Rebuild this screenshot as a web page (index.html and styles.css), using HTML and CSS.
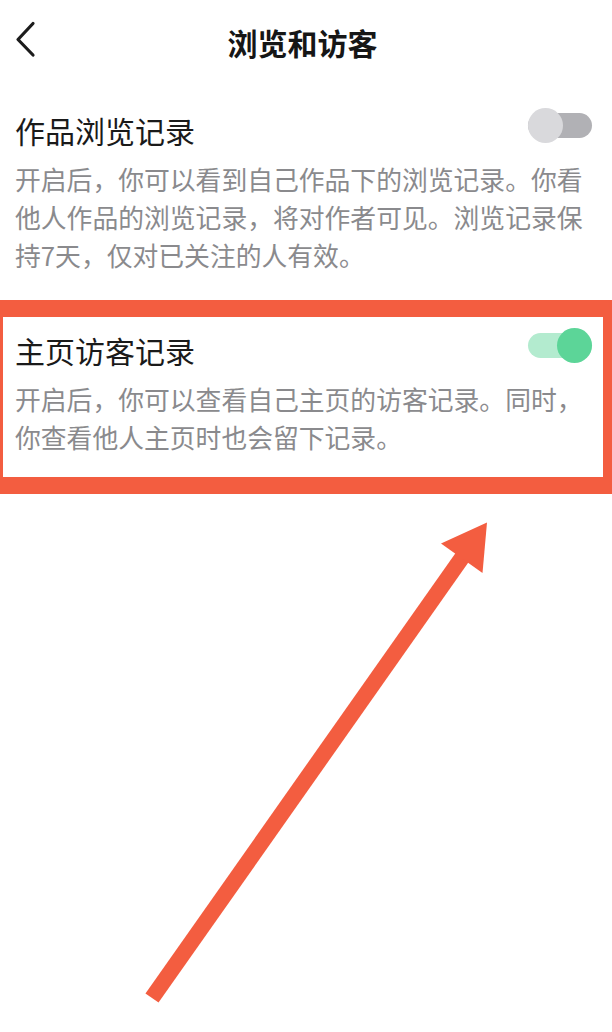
FILE: index.html
```html
<!DOCTYPE html>
<html lang="zh-CN">
<head>
<meta charset="utf-8">
<title>浏览和访客</title>
<link rel="stylesheet" href="styles.css">
</head>
<body>
<div class="page">
  <header class="topbar">
    <button class="back" aria-label="返回">
      <svg width="30" height="40" viewBox="0 0 30 40"><path d="M19 3.5 L4 19.5 L19 35" fill="none" stroke="#1c1c1c" stroke-width="3.2" stroke-linecap="round" stroke-linejoin="round"/></svg>
    </button>
    <h1 class="title">浏览和访客</h1>
    <span></span>
  </header>

  <section class="setting">
    <div class="setting-head">
      <h2 class="setting-name">作品浏览记录</h2>
      <span class="switch"><span class="track"></span><span class="knob"></span></span>
    </div>
    <p class="setting-desc">开启后，你可以看到自己作品下的浏览记录。你看他人作品的浏览记录，将对作者可见。浏览记录保持7天，仅对已关注的人有效。</p>
  </section>

  <section class="setting highlighted">
    <div class="setting-head">
      <h2 class="setting-name">主页访客记录</h2>
      <span class="switch on"><span class="track"></span><span class="knob"></span></span>
    </div>
    <p class="setting-desc">开启后，你可以查看自己主页的访客记录。同时，你查看他人主页时也会留下记录。</p>
    <div class="mark-box"></div>
  </section>

  <svg class="arrow" width="612" height="1032" viewBox="0 0 612 1032">
    <line x1="152" y1="998" x2="466" y2="552" stroke="#f35d40" stroke-width="16"/>
    <polygon points="487,522.5 441,543.5 482.5,573" fill="#f35d40"/>
  </svg>
</div>
</body>
</html>
```

FILE: styles.css
```css
html, body {
  margin: 0;
  padding: 0;
  background: #ffffff;
  overflow: hidden;
}

.page {
  position: relative;
  width: 612px;
  height: 1032px;
  overflow: hidden;
  font-family: "Noto Sans CJK SC", "Noto Sans", sans-serif;
}

.topbar {
  display: grid;
  grid-template-columns: 1fr auto 1fr;
  align-items: center;
  height: 84px;
}

.back {
  justify-self: start;
  margin-left: 14px;
  margin-top: -4px;
  padding: 0;
  border: 0;
  background: none;
  display: flex;
}

.title {
  margin: 0;
  margin-left: -7px;
  font-size: 30px;
  line-height: 40px;
  font-weight: 700;
  color: #161616;
}

.setting {
  position: relative;
  padding: 26px 20px 30px 15px;
}

.setting-head {
  display: flex;
  align-items: center;
  justify-content: space-between;
  height: 40px;
}

.setting-name {
  margin: 0;
  font-size: 30px;
  line-height: 40px;
  font-weight: 400;
  color: #1a1a1a;
}

.switch {
  position: relative;
  width: 64px;
  height: 35px;
  margin-bottom: 10px;
}

.switch .track {
  position: absolute;
  left: 0;
  right: 0;
  top: 5px;
  height: 25px;
  border-radius: 13px;
  background: #b1b1b5;
}

.switch .knob {
  position: absolute;
  left: 0;
  top: 0;
  width: 35px;
  height: 35px;
  border-radius: 50%;
  background: #d9d9dc;
}

.switch.on .track {
  background: #b3ebcf;
}

.switch.on .knob {
  left: auto;
  right: 0;
  background: #5cd598;
}

.setting-desc {
  margin: 10px 0 0;
  font-size: 25.8px;
  line-height: 38px;
  color: #8a8a8d;
}

.mark-box {
  position: absolute;
  top: -4px;
  left: -14px;
  right: -8px;
  bottom: -8px;
  border: 17px solid #f35d40;
  pointer-events: none;
}

.arrow {
  position: absolute;
  left: 0;
  top: 0;
  pointer-events: none;
}
```
